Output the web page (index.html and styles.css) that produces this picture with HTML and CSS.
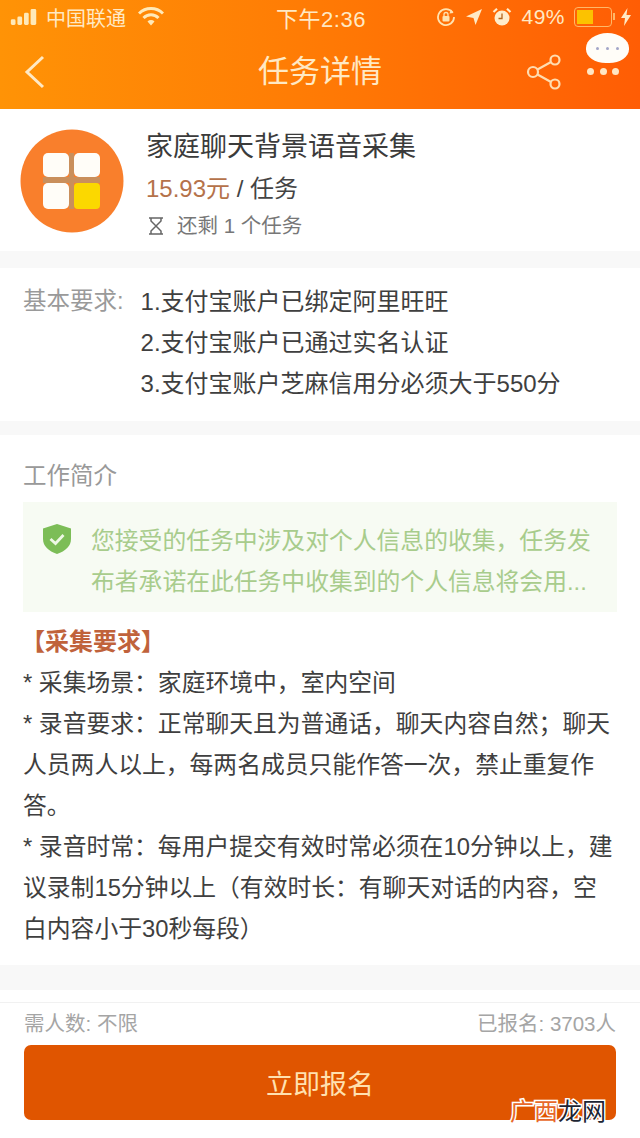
FILE: index.html
```html
<!DOCTYPE html>
<html lang="zh-CN">
<head>
    <meta charset="UTF-8">
    <meta name="viewport" content="width=device-width, initial-scale=1.0">
    <title>任务详情</title>
    <link rel="stylesheet" href="styles.css">
</head>
<body>
    <div class="page">
        <header class="top">
            <div class="status">
                <div class="status-left">
                    <svg class="signal" width="28" height="16" viewBox="0 0 28 17">
                        <rect x="0" y="11" width="5" height="6" rx="1.5"/>
                        <rect x="7" y="8" width="5" height="9" rx="1.5"/>
                        <rect x="14" y="4" width="5" height="13" rx="1.5"/>
                        <rect x="21" y="0" width="6" height="17" rx="1.5"/>
                    </svg>
                    <span class="carrier">中国联通</span>
                    <svg class="wifi" width="26" height="20" viewBox="0 0 26 20">
                        <path d="M1 6.500a17 17 0 0 1 24 0M5.500 11a10.500 10.500 0 0 1 15 0" fill="none" stroke="#ffe9b8" stroke-width="3"/>
                        <path d="M9.500 14.500a5 5 0 0 1 7 0L13 18.500z" fill="#ffe9b8"/>
                    </svg>
                </div>
                <span class="clock">下午2:36</span>
                <div class="status-right">
                    <svg width="20" height="20" viewBox="0 0 20 20">
                        <path d="M16.500 5.500A8 8 0 1 0 18 10" fill="none" stroke="#ffe2b0" stroke-width="1.800"/>
                        <path d="M15 2.500l2.500 3.500-4 .5z" fill="#ffe2b0"/>
                        <rect x="6.500" y="9" width="7" height="5.500" rx="1" fill="#ffe2b0"/>
                        <path d="M8 9V7.500a2 2 0 0 1 4 0V9" fill="none" stroke="#ffe2b0" stroke-width="1.300"/>
                    </svg>
                    <svg width="18" height="18" viewBox="0 0 18 18">
                        <path d="M17 1L1 8.500l7.500 1.500L10.500 17z" fill="#ffe9c4"/>
                    </svg>
                    <svg width="20" height="20" viewBox="0 0 20 20">
                        <circle cx="10" cy="11" r="7.500" fill="#ffeccb"/>
                        <path d="M10 6.500V11.500H6.500" fill="none" stroke="#b5651d" stroke-width="1.300"/>
                        <path d="M1.500 5L5 1.800M18.500 5L15 1.800" stroke="#ffeccb" stroke-width="2.200"/>
                    </svg>
                    <span class="percent">49%</span>
                    <div class="battery"><div class="battery-level" style="width: 49%"></div></div>
                    <svg width="10" height="18" viewBox="0 0 10 18">
                        <path d="M6.500 0L0 10h4l-1 8 7-11H5.500z" fill="#ffe9c4"/>
                    </svg>
                </div>
            </div>
            <nav class="nav">
                <svg class="back" width="22" height="34" viewBox="0 0 22 34">
                    <path d="M19 2L3 17l16 15" fill="none" stroke="#ffe9c4" stroke-width="3"/>
                </svg>
                <h1 class="nav-title">任务详情</h1>
                <svg class="share" width="36" height="36" viewBox="0 0 36 36">
                    <g fill="none" stroke="#ffdcb0" stroke-width="2.200">
                        <circle cx="7" cy="18" r="5"/>
                        <circle cx="29" cy="6" r="4.500"/>
                        <circle cx="29" cy="30" r="4.500"/>
                        <path d="M11.500 15.500L25 8M11.500 20.500L25 28"/>
                    </g>
                </svg>
            </nav>
            <div class="bubble">
                <div class="bubble-face"><i></i><i></i><i></i></div>
                <div class="bubble-dots"><i></i><i></i><i></i></div>
            </div>
        </header>

        <section class="card task">
            <svg class="task-logo" width="104" height="104" viewBox="0 0 104 104">
                <circle cx="52" cy="52" r="51.500" fill="#f97f2c"/>
                <path d="M49 24h5v56h-5zM23 48h57v6H23z" fill="#c98f5c"/>
                <rect x="23" y="24" width="26" height="24" rx="5" fill="#fffdf8"/>
                <rect x="54" y="24" width="26" height="24" rx="5" fill="#fffdf8"/>
                <rect x="23" y="54" width="26" height="26" rx="5" fill="#fffdf8"/>
                <rect x="54" y="54" width="26" height="26" rx="4" fill="#fbd800"/>
            </svg>
            <div class="task-info">
                <h2 class="task-name">家庭聊天背景语音采集</h2>
                <div class="task-price"><span class="price">15.93元</span> / 任务</div>
                <div class="task-left">
                    <svg width="16" height="18" viewBox="0 0 16 18">
                        <path d="M1 1h14M1 17h14M3 1v3l10 10v3M13 1v3L3 14v3" fill="none" stroke="#666" stroke-width="1.500"/>
                    </svg>
                    <span>还剩 1 个任务</span>
                </div>
            </div>
        </section>

        <section class="card reqs">
            <div class="reqs-label">基本要求:</div>
            <ol class="reqs-list">
                <li>1.支付宝账户已绑定阿里旺旺</li>
                <li>2.支付宝账户已通过实名认证</li>
                <li>3.支付宝账户芝麻信用分必须大于550分</li>
            </ol>
        </section>

        <section class="card intro">
            <h3 class="intro-title">工作简介</h3>
            <div class="notice">
                <svg class="notice-icon" width="28" height="30" viewBox="0 0 28 30">
                    <path d="M14 0L28 4.500V15c0 7-5.500 12-14 15C5.500 27 0 22 0 15V4.500z" fill="#7cbd57"/>
                    <path d="M7.500 15l5 4.500 8-8.500" fill="none" stroke="#eef8e6" stroke-width="2.800"/>
                </svg>
                <p class="notice-text">您接受的任务中涉及对个人信息的收集，任务发布者承诺在此任务中收集到的个人信息将会用...</p>
            </div>
            <div class="intro-body">
                <div class="intro-head">【采集要求】</div>
                <p>* 采集场景：家庭环境中，室内空间</p>
                <p>* 录音要求：正常聊天且为普通话，聊天内容自然；聊天人员两人以上，每两名成员只能作答一次，禁止重复作答。</p>
                <p>* 录音时常：每用户提交有效时常必须在10分钟以上，建议录制15分钟以上（有效时长：有聊天对话的内容，空白内容小于30秒每段）</p>
            </div>
        </section>

        <footer class="foot">
            <div class="foot-counts">
                <span>需人数: 不限</span>
                <span>已报名: 3703人</span>
            </div>
            <button class="signup">立即报名</button>
        </footer>

        <div class="mark"><span class="mark-a">广西</span><span class="mark-b">龙网</span></div>
    </div>
</body>
</html>
```

FILE: styles.css
```css
* {
    box-sizing: border-box;
}
body, html {
    margin: 0;
    padding: 0;
    height: 100%;
    overflow: hidden;
    font-family: "Liberation Sans", "Noto Sans CJK SC", sans-serif;
}
.page {
    position: relative;
    width: 640px;
    height: 1138px;
    display: flex;
    flex-direction: column;
    background-color: #f8f8f8;
    color: #444;
}

/* orange header */
.top {
    position: relative;
    height: 109px;
    flex: none;
    background: linear-gradient(90deg, #ff9306 0%, #ff7d05 45%, #ff5d05 100%);
    color: #ffe9c4;
}
.status {
    height: 34px;
    padding: 0 9px 0 10px;
    display: flex;
    align-items: center;
    justify-content: space-between;
}
.status-left {
    width: 201px;
    display: flex;
    align-items: center;
}
.signal {
    fill: #ffe9b8;
    margin-right: 8px;
}
.carrier {
    font-size: 20px;
    width: 92px;
}
.clock {
    font-size: 22px;
    letter-spacing: 0.5px;
}
.status-right {
    width: 200px;
    display: flex;
    align-items: center;
    justify-content: flex-end;
    gap: 9px;
}
.percent {
    font-size: 21px;
    letter-spacing: 0.5px;
}
.battery {
    position: relative;
    width: 38px;
    height: 20px;
    padding: 2px;
    border: 1px solid #ffb868;
    border-radius: 4px;
}
.battery::after {
    content: '';
    position: absolute;
    top: 5px;
    right: -4px;
    width: 2px;
    height: 7px;
    background-color: #ffb868;
}
.battery-level {
    height: 100%;
    background-color: #fcc200;
}
.nav {
    height: 75px;
    padding: 0 78px 0 24px;
    position: relative;
    display: flex;
    align-items: center;
    justify-content: space-between;
}
.nav-title {
    position: absolute;
    left: 0;
    right: 0;
    margin: 0;
    text-align: center;
    font-size: 31px;
    font-weight: 400;
    line-height: 75px;
}
.bubble {
    position: absolute;
    top: 33px;
    left: 586px;
    width: 43px;
}
.bubble-face {
    height: 30px;
    background-color: #fffdf8;
    border-radius: 50% 50% 46% 46%;
    display: flex;
    align-items: center;
    justify-content: center;
    gap: 7px;
}
.bubble-face i {
    width: 3px;
    height: 3px;
    border-radius: 50%;
    background-color: #a3a6c8;
}
.bubble-dots {
    width: 32px;
    margin: 5px 0 0 1px;
    display: flex;
    justify-content: space-between;
}
.bubble-dots i {
    width: 7px;
    height: 7px;
    border-radius: 50%;
    background-color: #ffe6c4;
}

/* white blocks */
.card {
    flex: none;
    background-color: #fff;
}
.task {
    height: 142px;
    padding: 20px 0 0 20px;
    display: flex;
    gap: 22px;
    align-items: flex-start;
}
.task-logo {
    flex: none;
}
.task-info {
    margin-top: -3px;
}
.task-name {
    margin: 0;
    font-size: 27px;
    font-weight: 400;
    line-height: 42px;
    color: #3b3b3b;
}
.task-price {
    font-size: 24px;
    line-height: 41px;
    color: #444;
}
.price {
    color: #b5724a;
}
.task-left {
    display: flex;
    align-items: center;
    gap: 13px;
    margin-left: 2px;
    font-size: 20.500px;
    line-height: 34px;
    color: #777;
}
.reqs {
    height: 153px;
    margin-top: 17px;
    padding: 13px 0 0 23px;
    display: flex;
    gap: 17px;
    font-size: 24px;
    line-height: 41px;
}
.reqs-label {
    font-size: 23.500px;
    color: #9a9a9a;
}
.reqs-list {
    list-style: none;
    margin: 0;
    padding: 0;
    color: #3f3f3f;
}
.intro {
    height: 530px;
    margin-top: 14px;
    padding: 20px 23px 0;
}
.intro-title {
    margin: 0;
    font-size: 23.500px;
    font-weight: 400;
    line-height: 42px;
    color: #999;
}
.notice {
    margin-top: 5px;
    height: 110px;
    padding: 18px 20px 0 20px;
    display: flex;
    gap: 20px;
    background-color: #f7fbf3;
}
.notice-icon {
    flex: none;
    margin-top: 4px;
}
.notice-text {
    margin: 0;
    font-size: 23.800px;
    line-height: 41px;
    color: #a8cc8c;
}
.intro-body {
    margin-top: 9px;
    font-size: 23.800px;
    line-height: 41px;
    color: #3f3f3f;
}
.intro-body p {
    margin: 0;
}
.intro-head {
    font-size: 24px;
    font-weight: 700;
    color: #c0623b;
    margin-left: -2px;
}

/* bottom bar */
.foot {
    flex: none;
    margin-top: 25px;
    padding: 12px 24px 0;
    height: 148px;
    background-color: #fff;
    background-image: linear-gradient(#f1f1f1, #f1f1f1);
    background-size: 100% 1px;
    background-position: 0 12px;
    background-repeat: no-repeat;
}
.foot-counts {
    height: 39px;
    margin-bottom: 4px;
    display: flex;
    justify-content: space-between;
    align-items: center;
    font-size: 20.500px;
    color: #a5a5a5;
}
.signup {
    display: block;
    width: 592px;
    height: 75px;
    border: none;
    border-radius: 7px;
    background-color: #e05500;
    color: #ffe1b0;
    font-family: inherit;
    font-size: 27px;
}

/* site stamp in the corner */
.mark {
    position: absolute;
    left: 510px;
    top: 1094px;
    font-size: 24px;
    line-height: 36px;
    white-space: nowrap;
    paint-order: stroke fill;
    -webkit-text-stroke: 3px #fff;
}
.mark-a {
    color: #e8682a;
}
.mark-b {
    color: #1c2433;
}
```
